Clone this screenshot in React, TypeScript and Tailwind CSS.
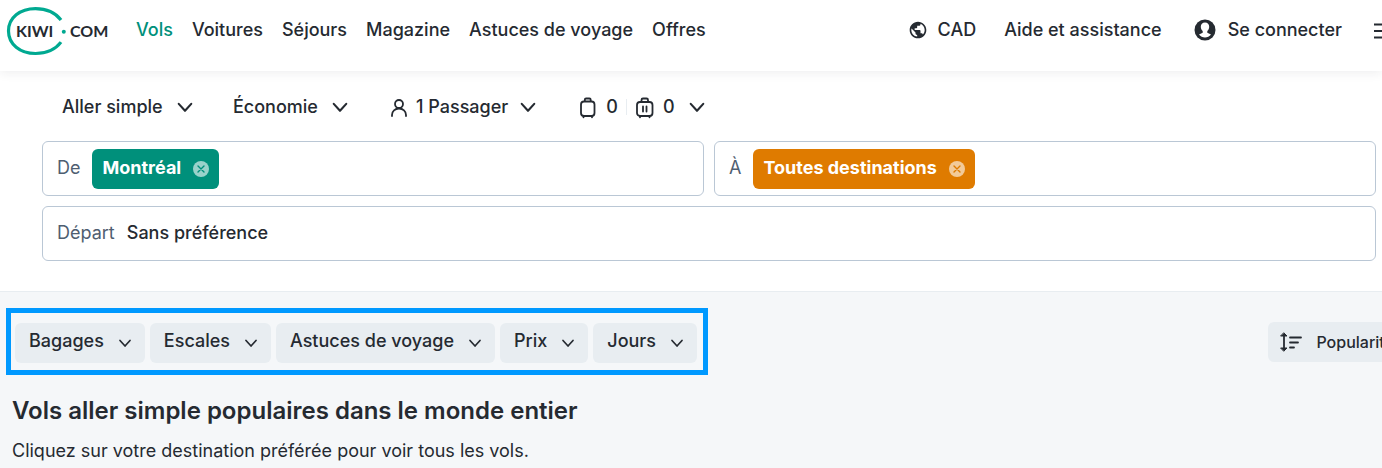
import { useState } from "react";
import { MdPublic } from "react-icons/md";

function Chevron({ small = false }: { small?: boolean }) {
  return (
    <svg viewBox="0 0 16 16" className={small ? "size-4 shrink-0" : "size-5 shrink-0"} fill="none" stroke="currentColor" strokeWidth="1.7" strokeLinecap="round" strokeLinejoin="round" aria-hidden="true">
      <path d="M3 5.500 8 11l5-5.500" />
    </svg>
  );
}

function Logo() {
  return (
    <svg viewBox="0 0 106 52" className="h-[52px] w-[106px]" role="img" aria-label="Kiwi.com">
      <path d="M57 16C51.500 8.800 42 4.600 31.500 4.600 16 4.600 4.500 13.800 4.500 27S16 49.500 31.500 49.500c10.500 0 20-4.200 25.500-11.400" fill="none" stroke="#00a991" strokeWidth="3.200" />
      <circle cx="59.800" cy="27.800" r="2" fill="#00a991" />
      <text x="12" y="33" fontSize="16" fontWeight="700" fill="#252a31" className="font-['Lato',sans-serif]">KIWI</text>
      <text x="66" y="33" fontSize="16" fontWeight="700" fill="#252a31" className="font-['Lato',sans-serif]">COM</text>
    </svg>
  );
}

function Dropdown({ label, value }: { label: string; value: string }) {
  return (
    <label className="flex items-center gap-2">
      <span className="sr-only">{label}</span>
      <select className="-my-1 h-8 appearance-none bg-transparent pr-1 font-medium outline-none">
        <option>{value}</option>
      </select>
      <Chevron />
    </label>
  );
}

function Bag({ cabin = false }: { cabin?: boolean }) {
  return (
    <svg viewBox="0 0 20 24" className="h-6 w-5" fill="none" stroke="currentColor" strokeWidth="1.8" strokeLinecap="round" strokeLinejoin="round" aria-hidden="true">
      {cabin ? (
        <>
          <rect x="2" y="7" width="15.500" height="14" rx="3" />
          <path d="M6.500 6.500V5A1.500 1.500 0 0 1 8 3.500h3.500A1.500 1.500 0 0 1 13 5v1.500M8 11.500v5M11.500 11.500v5M5 21.500v.8M14.500 21.500v.8" />
        </>
      ) : (
        <>
          <rect x="3" y="6.500" width="13.500" height="14.500" rx="3" />
          <path d="M6.800 6V4.800a1.300 1.300 0 0 1 1.300-1.300h3.300a1.300 1.300 0 0 1 1.300 1.300V6M5.500 21.500v.8M14 21.500v.8" />
        </>
      )}
    </svg>
  );
}

type FieldProps = { id: string; label: string; chip: string; chipClass: string; crossClass: string };

function Field({ id, label, chip, chipClass, crossClass }: FieldProps) {
  const [shown, setShown] = useState(true);
  return (
    <div className="flex h-[55px] min-w-0 flex-1 items-center rounded-md border border-[#bac7d5] bg-white px-3.5">
      <label htmlFor={id} className="mr-3 pb-0.5 text-[#4f5e71]">{label}</label>
      {shown && (
        <span className={`flex h-10 shrink-0 items-center gap-3 rounded-md px-2.5 font-bold text-white ${chipClass}`}>
          <span className="pb-0.5">{chip}</span>
          <button type="button" aria-label={`Retirer ${chip}`} onClick={() => setShown(false)}>
            <svg viewBox="0 0 16 16" className={`size-4 ${crossClass}`}>
              <circle cx="8" cy="8" r="8" fill="white" fillOpacity="0.6" />
              <path d="m5 5 6 6M11 5l-6 6" stroke="currentColor" strokeWidth="1.4" strokeLinecap="round" />
            </svg>
          </button>
        </span>
      )}
      <input id={id} className="min-w-0 flex-1 bg-transparent outline-none" />
    </div>
  );
}

const links = ["Vols", "Voitures", "Séjours", "Magazine", "Astuces de voyage", "Offres"];
const filters = ["Bagages", "Escales", "Astuces de voyage", "Prix", "Jours"];

export default function App() {
  return (
    <div className="flex min-h-screen flex-col overflow-hidden bg-white font-['Inter',sans-serif] text-lg leading-6 text-[#252a31]">
      <header className="relative flex h-[71px] items-start justify-between bg-white pt-1 pl-1 font-medium whitespace-nowrap shadow-[0_2px_10px_rgba(37,42,49,0.08)]">
        <div className="flex items-start">
          <a href="#accueil"><Logo /></a>
          <nav className="ml-[26px] flex gap-[19px] pt-3.5">
            {links.map((link, i) => (
              <a key={link} href="#menu" className={i === 0 ? "text-[#00907b]" : ""}>{link}</a>
            ))}
          </nav>
        </div>
        <div className="-mr-3 flex items-center pt-3.5">
          <button type="button" className="mr-7 flex items-center gap-2.5"><MdPublic className="size-5" />CAD</button>
          <a href="#aide" className="mr-8">Aide et assistance</a>
          <button type="button" className="mr-8 flex items-center gap-3">
            <svg viewBox="0 0 22 22" className="size-[22px]" aria-hidden="true">
              <circle cx="11" cy="11" r="10.500" fill="currentColor" />
              <path d="M11 3.500c-2.600 0-4.200 1.800-4.200 4.300 0 1.700.8 3.300 1.900 4.200v1.700L5 15.500c1.500 1.900 3.700 3 6 3s4.500-1.100 6-3l-3.700-1.800V12c1.100-.9 1.900-2.500 1.900-4.200 0-2.500-1.600-4.300-4.200-4.300Z" fill="white" />
            </svg>
            Se connecter
          </button>
          <button type="button" aria-label="Menu">
            <svg viewBox="0 0 20 20" className="size-5" fill="none" stroke="currentColor" strokeWidth="1.8"><path d="M0 4.500h20M0 11h20M0 17.500h20" /></svg>
          </button>
        </div>
      </header>

      <form className="pt-6 pr-1.5 pb-[30px] pl-[42px]">
        <div className="flex items-center pl-5 font-medium whitespace-nowrap">
          <Dropdown label="Type de voyage" value="Aller simple" />
          <div className="ml-[38px]"><Dropdown label="Classe" value="Économie" /></div>
          <button type="button" className="ml-10 flex items-center">
            <svg viewBox="0 0 18 20" className="mr-2 h-5 w-[18px]" fill="none" stroke="currentColor" strokeWidth="1.8" strokeLinecap="round" aria-hidden="true">
              <circle cx="9" cy="7" r="4" /><path d="M2 19v-1c0-3.800 3-6.500 7-6.500s7 2.700 7 6.500v1" />
            </svg>
            <span className="mr-2.5">1 Passager</span><Chevron />
          </button>
          <button type="button" className="ml-10 flex items-center">
            <Bag /><span className="mx-2">0</span>
            <span className="mr-2 h-4 w-px bg-[#e8edf1]" />
            <Bag cabin /><span className="mr-3 ml-2">0</span><Chevron />
          </button>
        </div>
        <div className="mt-[22px] flex gap-2.5">
          <Field id="de" label="De" chip="Montréal" chipClass="bg-[#00907b]" crossClass="text-[#00907b]" />
          <Field id="a" label="À" chip="Toutes destinations" chipClass="bg-[#df7b00]" crossClass="text-[#df7b00]" />
        </div>
        <div className="mt-2.5 flex h-[55px] items-center rounded-md border border-[#bac7d5] px-3.5 pb-0.5">
          <label htmlFor="depart" className="mr-3 text-[#4f5e71]">Départ</label>
          <input id="depart" defaultValue="Sans préférence" className="min-w-0 flex-1 bg-transparent font-medium outline-none" />
        </div>
      </form>

      <main className="flex-1 border-t border-[#e8edf1] bg-[#f5f7f9]">
        <div className="flex items-start justify-between pt-4 pl-1.5 whitespace-nowrap">
          <div className="flex gap-[5px] border-[5px] border-[#0099ff] pt-2.5 pr-1.5 pb-[7px] pl-1 font-medium">
            {filters.map((filter) => (
              <button key={filter} type="button" aria-haspopup="dialog" className="flex h-10 items-center gap-[13px] rounded-md bg-[#e8edf1] pr-3 pl-3.5">
                <span className="pb-1">{filter}</span><Chevron small />
              </button>
            ))}
          </div>
          <button type="button" className="mt-3.5 -mr-6 flex h-10 items-center gap-3.5 rounded-md bg-[#e8edf1] px-3 text-base font-medium">
            <svg viewBox="0 0 22 20" className="h-5 w-[22px]" fill="none" stroke="currentColor" strokeWidth="1.8" strokeLinecap="round" strokeLinejoin="round" aria-hidden="true">
              <path d="M4 3v14M10 5.500h11M10 10.500h8M10 15.500h4" /><path d="M4 1 7 4H1ZM4 19l3-3H1Z" fill="currentColor" strokeWidth="1" />
            </svg>
            Popularité
          </button>
        </div>
        <h1 className="mt-5 pl-3 text-2xl leading-8 font-semibold">Vols aller simple populaires dans le monde entier</h1>
        <p className="mt-3 pl-3">Cliquez sur votre destination préférée pour voir tous les vols.</p>
      </main>
    </div>
  );
}
